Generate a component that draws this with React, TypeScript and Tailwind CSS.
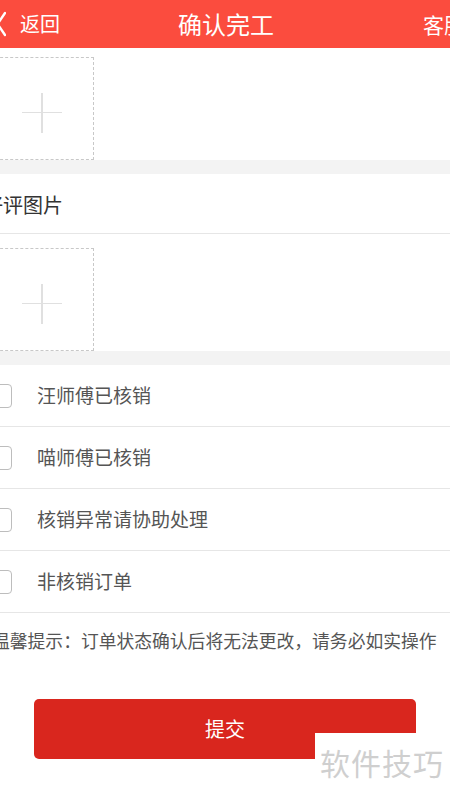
import React from "react";

const font = { fontFamily: '"Noto Sans CJK SC", "Noto Sans", sans-serif' };

function PhotoBox() {
  return (
    <div className="ml-[-10px] w-[104px] h-[103px] border border-dashed border-[#c8c8c8] flex items-center justify-center">
      <div className="relative w-[40px] h-[40px] mt-[8px]">
        <div className="absolute left-0 right-0 top-[19px] h-[1.5px] bg-[#e0e0e0]" />
        <div className="absolute top-0 bottom-0 left-[19px] w-[1.5px] bg-[#e0e0e0]" />
      </div>
    </div>
  );
}

function CheckRow({ label }: { label: string }) {
  return (
    <div className="h-[62px] flex items-center border-b border-[#e6e6e6]">
      <div className="ml-[-12px] w-[24px] h-[24px] rounded-[4px] border border-[#bdbdbd] bg-white" />
      <span className="ml-[25px] text-[19px] text-[#555]">{label}</span>
    </div>
  );
}

export default function App() {
  return (
    <div className="relative w-[450px] h-[801px] overflow-hidden bg-white" style={font}>
      <div className="h-[48px] bg-[#fb4c3e] grid grid-cols-[178px_94px_178px] items-center text-white">
        <div className="flex items-center">
          <svg width="10" height="26" viewBox="0 0 10 26" className="ml-[-4px]">
            <path d="M9 2 L1.5 13 L9 24" stroke="white" strokeWidth="2.4" fill="none" strokeLinecap="round" strokeLinejoin="round" />
          </svg>
          <span className="ml-[14px] text-[20px] leading-none">返回</span>
        </div>
        <span className="text-center text-[24px] leading-none whitespace-nowrap">确认完工</span>
        <div className="flex items-center">
          <span className="ml-[151px] text-[21px] leading-none whitespace-nowrap">客服</span>
        </div>
      </div>
      <div className="pt-[9px]">
        <PhotoBox />
      </div>
      <div className="h-[14px] bg-[#f3f3f3]" />
      <div className="h-[60px] flex items-center border-b border-[#e6e6e6]">
        <span className="ml-[-17px] mt-[3px] text-[20px] text-[#333]">好评图片</span>
      </div>
      <div className="pt-[14px]">
        <PhotoBox />
      </div>
      <div className="h-[14px] bg-[#f3f3f3]" />
      <CheckRow label="汪师傅已核销" />
      <CheckRow label="喵师傅已核销" />
      <CheckRow label="核销异常请协助处理" />
      <CheckRow label="非核销订单" />
      <div className="h-[55px] flex items-center">
        <span className="ml-[-8px] text-[17.8px] text-[#555] whitespace-nowrap">温馨提示：订单状态确认后将无法更改，请务必如实操作</span>
      </div>
      <div className="mt-[31px] ml-[34px] w-[382px] h-[60px] rounded-[5px] bg-[#d9261e] flex items-center justify-center">
        <span className="text-white text-[20px]">提交</span>
      </div>
      <div className="absolute left-[315px] top-[733px] w-[135px] h-[68px] bg-white flex items-start">
        <span className="ml-[5px] mt-[14px] text-[30px] leading-none text-[#cfcfcf] tracking-[1px]">软件技巧</span>
      </div>
    </div>
  );
}
